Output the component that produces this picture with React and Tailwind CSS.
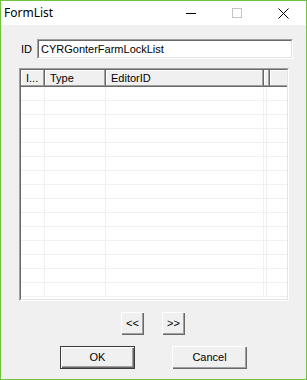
import React from "react";

const rows = Array.from({ length: 15 });

const HeaderCell = ({ w, children }) => (
  <div
    className={`${w} h-full shrink-0 border-r border-b border-[#696969] bg-[#f0f0f0] shadow-[inset_-1px_-1px_0_#a0a0a0,inset_1px_1px_0_#ffffff] pl-[5px] flex items-center text-[11px] text-black leading-none`}
  >
    {children}
  </div>
);

const Btn = ({ w, children, def }) => (
  <div
    className={`${w} h-[23px] flex items-center justify-center text-[11px] text-black bg-[#f0f0f0] ${
      def
        ? "border border-[#3c3c3c] shadow-[inset_1px_1px_0_#ffffff,inset_-1px_-1px_0_#696969,inset_-2px_-2px_0_#a0a0a0]"
        : "shadow-[inset_1px_1px_0_#ffffff,inset_-1px_-1px_0_#696969,inset_-2px_-2px_0_#a0a0a0]"
    }`}
  >
    {children}
  </div>
);

export default function App() {
  return (
    <div
      className="w-[307px] h-[380px] border border-[#6fc33f] bg-[#f0f0f0] flex flex-col overflow-hidden"
      style={{ fontFamily: '"Liberation Sans", Arial, sans-serif' }}
    >
      {/* Title bar */}
      <div className="h-[24px] bg-white flex items-center shrink-0">
        <span
          className="pl-[3px] text-[12px] text-black flex-1"
          style={{ fontFamily: '"Noto Sans", sans-serif' }}
        >
          FormList
        </span>
        <div className="w-[46px] h-full flex items-center justify-center">
          <svg width="10" height="10" viewBox="0 0 10 10">
            <line x1="0" y1="5.5" x2="10" y2="5.5" stroke="#000" strokeWidth="1" />
          </svg>
        </div>
        <div className="w-[46px] h-full flex items-center justify-center">
          <svg width="10" height="10" viewBox="0 0 10 10">
            <rect x="0.5" y="0.5" width="9" height="9" fill="none" stroke="#c4c4c4" strokeWidth="1" />
          </svg>
        </div>
        <div className="w-[46px] h-full flex items-center justify-center">
          <svg width="11" height="11" viewBox="0 0 11 11">
            <path d="M0.5 0.5L10.5 10.5M10.5 0.5L0.5 10.5" stroke="#000" strokeWidth="1" />
          </svg>
        </div>
      </div>

      {/* ID row */}
      <div className="mt-[14px] flex items-center">
        <span className="w-[36px] pl-[20px] text-[11px] text-black">ID</span>
        <div className="w-[256px] h-[20px] border-t border-l border-[#a0a0a0] border-r border-b border-r-white border-b-white">
          <div className="h-full border-t border-l border-[#696969] border-r border-b border-r-[#e3e3e3] border-b-[#e3e3e3] bg-white flex items-center pl-[2px] text-[11px] text-black">
            CYRGonterFarmLockList
          </div>
        </div>
      </div>

      {/* List view */}
      <div className="mt-[9px] ml-[18px] w-[270px] h-[233px] border-t border-l border-[#a0a0a0] border-r border-b border-r-white border-b-white">
        <div className="h-full border-t border-l border-[#696969] border-r border-b border-r-[#e3e3e3] border-b-[#e3e3e3] bg-white overflow-hidden">
          <div className="h-[17px] flex bg-[#f0f0f0]">
            <HeaderCell w="w-[24px]">I...</HeaderCell>
            <HeaderCell w="w-[61px]">Type</HeaderCell>
            <HeaderCell w="w-[158px]">EditorID</HeaderCell>
            <HeaderCell w="w-[3px]"></HeaderCell>
            <div className="flex-1 h-full border-b border-[#696969] shadow-[inset_0_-1px_0_#a0a0a0,inset_1px_1px_0_#ffffff]"></div>
          </div>
          {rows.map((_, i) => (
            <div key={i} className="h-[14px] flex border-b border-[#f0f0f0]">
              <div className="w-[24px] border-r border-[#f0f0f0]"></div>
              <div className="w-[61px] border-r border-[#f0f0f0]"></div>
              <div className="w-[158px] border-r border-[#f0f0f0]"></div>
              <div className="w-[3px] border-r border-[#f0f0f0]"></div>
              <div className="flex-1"></div>
            </div>
          ))}
        </div>
      </div>

      {/* Arrow buttons */}
      <div className="mt-[11px] flex pl-[120px] gap-[18px]">
        <Btn w="w-[23px]">&lt;&lt;</Btn>
        <Btn w="w-[23px]">&gt;&gt;</Btn>
      </div>

      {/* OK / Cancel */}
      <div className="mt-[11px] flex pl-[59px] gap-[37px]">
        <Btn w="w-[75px]" def>
          OK
        </Btn>
        <Btn w="w-[75px]">Cancel</Btn>
      </div>
    </div>
  );
}
